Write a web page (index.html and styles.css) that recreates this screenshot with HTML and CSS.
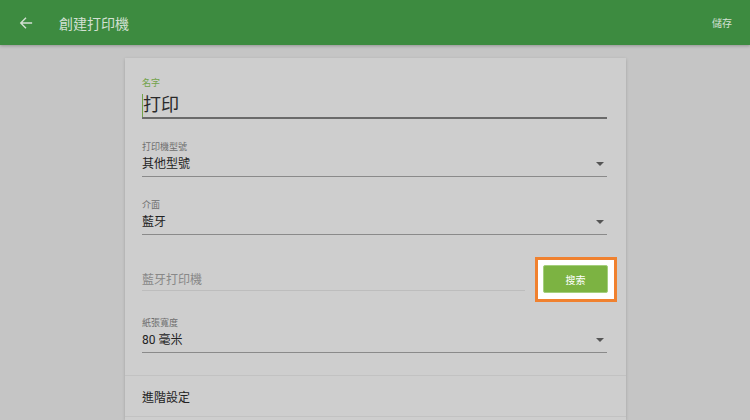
FILE: index.html
```html
<!DOCTYPE html>
<html lang="zh-Hant">
<head>
<meta charset="utf-8">
<link rel="stylesheet" href="styles.css">
</head>
<body>
<header class="topbar">
  <svg class="back" width="14" height="14" viewBox="0 0 16 16"><path d="M15 8H2.5M8 2L2 8l6 6" fill="none" stroke="#d3e0d3" stroke-width="1.6"/></svg>
  <span class="title">創建打印機</span>
  <span class="save">儲存</span>
</header>
<main class="page">
  <section class="card">
    <div class="fields">
      <div class="field name">
        <div class="label green">名字</div>
        <div class="value big"><span class="cursor"></span>打印</div>
      </div>
      <div class="field select">
        <div class="label">打印機型號</div>
        <div class="value"><span>其他型號</span><span class="caret"></span></div>
      </div>
      <div class="field select">
        <div class="label">介面</div>
        <div class="value"><span>藍牙</span><span class="caret"></span></div>
      </div>
      <div class="search-row">
        <div class="search-input">藍牙打印機</div>
        <div class="highlight"><button class="btn">搜索</button></div>
      </div>
      <div class="field select paper">
        <div class="label">紙張寬度</div>
        <div class="value"><span>80 毫米</span><span class="caret"></span></div>
      </div>
    </div>
    <div class="advanced">進階設定</div>
  </section>
</main>
</body>
</html>
```
FILE: styles.css
```css
html, body {
  margin: 0;
  padding: 0;
  height: 100%;
}
body {
  background: #c5c5c5;
  font-family: Roboto, "Noto Sans CJK TC", sans-serif;
  overflow: hidden;
}
.topbar {
  height: 45px;
  background: #3d8b40;
  display: flex;
  align-items: center;
  box-shadow: 0 1px 3px rgba(0,0,0,0.25);
  position: relative;
  z-index: 1;
}
.back {
  margin-left: 19px;
  display: block;
}
.title {
  margin-left: 26px;
  color: #d3e0d3;
  font-size: 14px;
}
.save {
  margin-left: auto;
  margin-right: 18px;
  color: #d3e0d3;
  font-size: 10px;
}
.page {
  padding-top: 13px;
  padding-left: 125px;
}
.card {
  width: 501px;
  background: #cecece;
  box-shadow: 0 1px 3px rgba(0,0,0,0.18);
  height: 362px;
  overflow: hidden;
}
.fields {
  padding: 19px 19px 0 17px;
}
.field {
  margin-bottom: 22px;
}
.label {
  font-size: 9px;
  line-height: 12px;
  color: #6e6e6e;
}
.select .label {
  margin-bottom: 2px;
}
.label.green {
  color: #72a34a;
}
.value {
  font-size: 12px;
  line-height: 18px;
  color: #222;
  border-bottom: 1px solid #8a8a8a;
  padding-bottom: 3px;
  display: flex;
  justify-content: space-between;
  align-items: center;
}
.value.big {
  margin-top: 4px;
  font-size: 18px;
  line-height: 24px;
  border-bottom: 2px solid #6a6a6a;
  padding-bottom: 0;
  justify-content: flex-start;
  color: #2a2a2a;
}
.cursor {
  width: 1px;
  height: 23px;
  background: #72a34a;
}
.caret {
  width: 0;
  height: 0;
  border-left: 4px solid transparent;
  border-right: 4px solid transparent;
  border-top: 4px solid #555;
  margin-right: 3px;
}
.search-row {
  display: flex;
  align-items: flex-start;
  margin-top: 1px;
  margin-right: -10px;
}
.search-input {
  margin-top: 14px;
  width: 383px;
  font-size: 12px;
  line-height: 18px;
  color: #888;
  border-bottom: 1px solid #bdbdbd;
  padding-bottom: 1px;
}
.highlight {
  margin-left: auto;
  border: 3px solid #f0812f;
  background: #fff;
  padding: 5px 6px 6px 5px;
}
.btn {
  display: block;
  width: 65px;
  height: 28px;
  border: 1px solid #a4cf7c;
  border-radius: 2px;
  background: #7cb342;
  color: #fff;
  font-family: Roboto, "Noto Sans CJK TC", sans-serif;
  font-size: 10px;
  padding: 0;
}
.paper {
  margin-top: 15px;
  margin-bottom: 0;
}
.advanced {
  margin-top: 22px;
  border-top: 1px solid #c2c2c2;
  border-bottom: 1px solid #c2c2c2;
  padding: 13px 17px 9px;
  font-size: 12px;
  line-height: 18px;
  color: #222;
}
```
